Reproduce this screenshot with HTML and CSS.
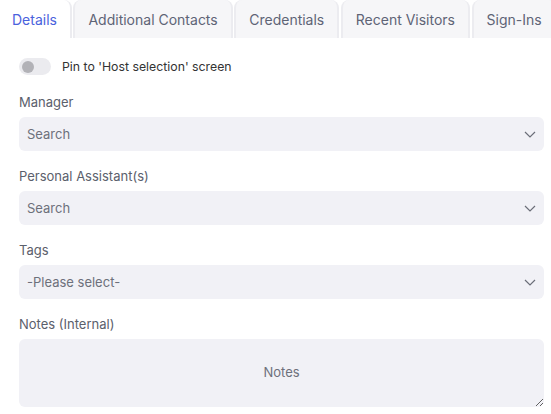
FILE: index.html
```html
<!DOCTYPE html>
<html lang="en">

<head>
    <meta charset="UTF-8">
    <meta name="viewport" content="width=device-width, initial-scale=1.0">
    <title>Host Details</title>
    <link rel="stylesheet" href="styles.css">
</head>

<body>
    <!-- Tabs -->
    <nav class="tabs">
        <div class="tab active">Details</div>
        <div class="tab">Additional Contacts</div>
        <div class="tab">Credentials</div>
        <div class="tab">Recent Visitors</div>
        <div class="tab">Sign-Ins</div>
    </nav>

    <div class="content">
        <label class="toggle-row">
            <span class="toggle"><span class="knob"></span></span>
            <span>Pin to 'Host selection' screen</span>
        </label>

        <div class="field">
            <div class="field-label">Manager</div>
            <div class="select">
                <span>Search</span>
                <svg class="chevron" width="12" height="7" viewBox="0 0 12 7"><path d="M1 1l5 5 5-5" fill="none" stroke="#6b6e78" stroke-width="1.2"/></svg>
            </div>
        </div>

        <div class="field">
            <div class="field-label">Personal Assistant(s)</div>
            <div class="select">
                <span>Search</span>
                <svg class="chevron" width="12" height="7" viewBox="0 0 12 7"><path d="M1 1l5 5 5-5" fill="none" stroke="#6b6e78" stroke-width="1.2"/></svg>
            </div>
        </div>

        <div class="field">
            <div class="field-label">Tags</div>
            <div class="select">
                <span>-Please select-</span>
                <svg class="chevron" width="12" height="7" viewBox="0 0 12 7"><path d="M1 1l5 5 5-5" fill="none" stroke="#6b6e78" stroke-width="1.2"/></svg>
            </div>
        </div>

        <div class="field">
            <div class="field-label">Notes (Internal)</div>
            <textarea class="notes" placeholder="Notes"></textarea>
        </div>
    </div>
</body>

</html>
```

FILE: styles.css
```css
body {
    font-family: Inter, "Noto Sans", sans-serif;
    margin: 0;
    padding: 0;
    background-color: white;
    color: #333;
    font-size: 13px;
}

.tabs {
    display: flex;
    height: 38px;
    gap: 1.5px;
    overflow: hidden;
}

.tab {
    flex: none;
    display: flex;
    align-items: center;
    padding: 0 13px;
    font-size: 14px;
    color: #5e6476;
    background-color: #f6f6f8;
    border-left: 2px solid #ececf0;
    border-right: 2px solid #ececf0;
    border-radius: 8px 8px 0 0;
}

.tab.active {
    color: #4a62dd;
    background-color: white;
    border-left: none;
    border-right: 2px solid #ececf0;
    padding: 0 13px 0 12px;
}

.content {
    padding: 20px 7px 0 19px;
}

.toggle-row {
    display: flex;
    align-items: center;
    gap: 11px;
    height: 17px;
    margin-bottom: 19px;
    color: #333;
    font-size: 12.3px;
}

.toggle {
    width: 32px;
    height: 17px;
    border-radius: 9px;
    background-color: #ebebef;
    display: flex;
    align-items: center;
    padding-left: 3px;
    box-sizing: border-box;
}

.knob {
    width: 12px;
    height: 12px;
    border-radius: 50%;
    background-color: #b2b2b7;
}

.field {
    margin-bottom: 17px;
}

.field-label {
    line-height: 16px;
    margin-bottom: 7px;
    color: #5b606c;
}

.select {
    height: 34px;
    background-color: #f1f1f6;
    border-radius: 6px;
    display: flex;
    align-items: center;
    justify-content: space-between;
    padding: 0 8px;
    color: #6d707b;
}

.notes {
    display: block;
    width: 100%;
    height: 68px;
    box-sizing: border-box;
    border: none;
    border-radius: 6px;
    background-color: #f1f1f6;
    font-family: Inter, "Noto Sans", sans-serif;
    font-size: 13px;
    text-align: center;
    padding-top: 25px;
}

.notes::placeholder {
    color: #6d707b;
}
```
